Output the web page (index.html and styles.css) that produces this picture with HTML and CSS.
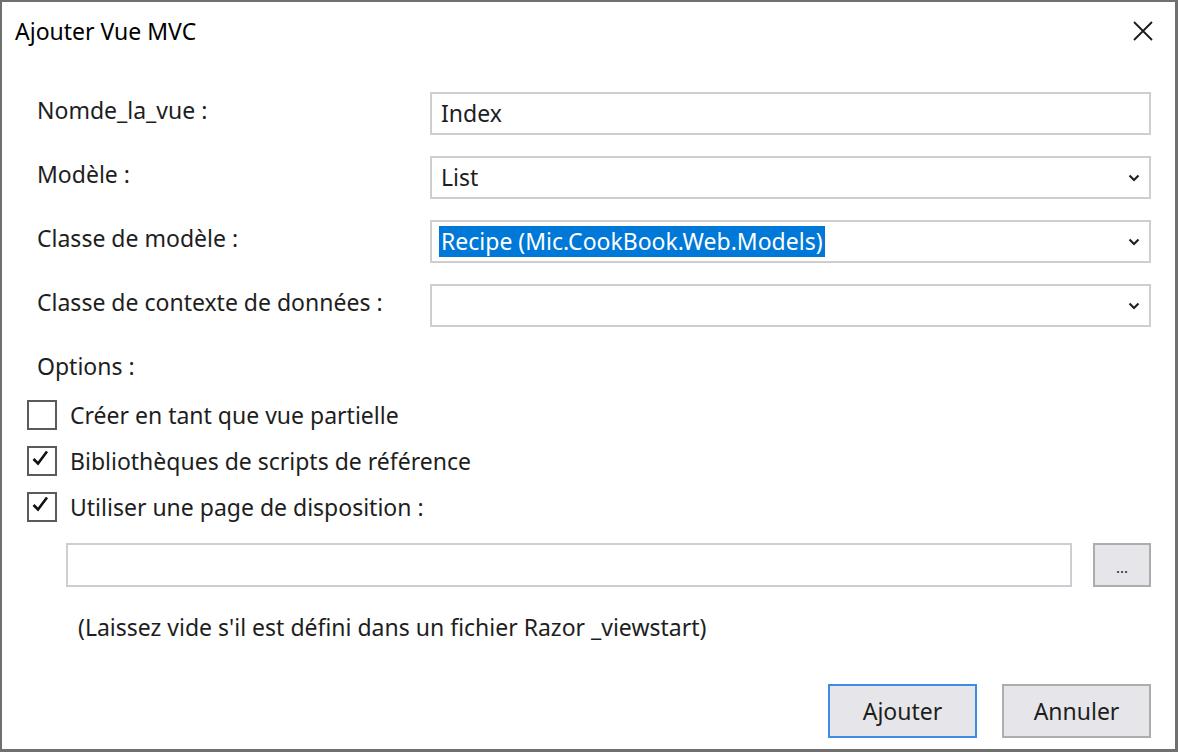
FILE: index.html
```html
<!DOCTYPE html>
<html lang="fr">
<head>
<meta charset="utf-8">
<title>Ajouter Vue MVC</title>
<link rel="stylesheet" href="styles.css">
</head>
<body>
<div class="dialog">
  <div class="header">
    <div class="title">Ajouter Vue MVC</div>
    <div class="close">
      <svg width="20" height="20" viewBox="0 0 20 20"><path d="M1 1 L19 19 M19 1 L1 19" stroke="#1a1a1a" stroke-width="1.8" fill="none"/></svg>
    </div>
  </div>
  <div class="form">
    <div class="label">Nomde_la_vue :</div>
    <div class="field"><span class="value">Index</span></div>

    <div class="label">Modèle :</div>
    <div class="field select"><span class="value">List</span><span class="chev"><svg width="12" height="8" viewBox="0 0 12 8"><path d="M1.5 1.5 L6 6 L10.5 1.5" stroke="#222" stroke-width="2.2" fill="none"/></svg></span></div>

    <div class="label">Classe de modèle :</div>
    <div class="field select"><span class="value selected">Recipe (Mic.CookBook.Web.Models)</span><span class="chev"><svg width="12" height="8" viewBox="0 0 12 8"><path d="M1.5 1.5 L6 6 L10.5 1.5" stroke="#222" stroke-width="2.2" fill="none"/></svg></span></div>

    <div class="label">Classe de contexte de données :</div>
    <div class="field select"><span class="value"></span><span class="chev"><svg width="12" height="8" viewBox="0 0 12 8"><path d="M1.5 1.5 L6 6 L10.5 1.5" stroke="#222" stroke-width="2.2" fill="none"/></svg></span></div>
  </div>

  <div class="options-label">Options :</div>
  <div class="checks">
    <div class="check-row"><span class="box"></span><span>Créer en tant que vue partielle</span></div>
    <div class="check-row"><span class="box"><svg width="26" height="26" viewBox="0 0 26 26"><path d="M4.5 11 L9 15.5 L18 3.5" stroke="#111" stroke-width="2.6" fill="none"/></svg></span><span>Bibliothèques de scripts de référence</span></div>
    <div class="check-row"><span class="box"><svg width="26" height="26" viewBox="0 0 26 26"><path d="M4.5 11 L9 15.5 L18 3.5" stroke="#111" stroke-width="2.6" fill="none"/></svg></span><span>Utiliser une page de disposition :</span></div>
  </div>

  <div class="layout-row">
    <div class="field layout-field"></div>
    <div class="browse">...</div>
  </div>
  <div class="note">(Laissez vide s'il est défini dans un fichier Razor _viewstart)</div>

  <div class="buttons">
    <div class="btn primary">Ajouter</div>
    <div class="btn">Annuler</div>
  </div>
</div>
</body>
</html>
```

FILE: styles.css
```css
* { box-sizing: border-box; }
html, body { margin: 0; padding: 0; background: #fff; }
body {
  font-family: "Noto Sans", "Open Sans", sans-serif;
  font-size: 23px;
  line-height: 30px;
  color: #1e1e1e;
}
.dialog {
  width: 1178px;
  height: 752px;
  border-style: solid;
  border-color: #707070;
  border-width: 2px 3px 3px 2px;
  background: #fff;
  position: relative;
}
.header {
  display: flex;
  justify-content: space-between;
  align-items: center;
  height: 58px;
  padding: 0 22px 0 13px;
}
.title {
  font-size: 23px;
  color: #000;
}
.close { display: flex; }
.form {
  display: grid;
  grid-template-columns: 393px 1fr;
  row-gap: 21px;
  padding: 32px 24px 0 35px;
}
.label {
  padding-top: 3px;
}
.field {
  height: 43px;
  border: 2px solid #cdcdd3;
  display: flex;
  align-items: center;
  padding: 0 0 0 7px;
  background: #fff;
}
.value { line-height: 31px; padding: 0 2px; }
.value.selected { background: #0078d7; color: #fff; }
.select { justify-content: space-between; }
.chev { display: flex; margin-right: 9px; }
.options-label {
  padding: 24px 0 0 35px;
}
.checks {
  padding: 19px 0 0 25px;
  display: flex;
  flex-direction: column;
  gap: 16px;
}
.check-row {
  display: flex;
  align-items: center;
  gap: 13px;
  height: 30px;
}
.box {
  width: 30px;
  height: 30px;
  border: 2px solid #5a5a5a;
  display: flex;
  background: #fff;
}
.layout-row {
  display: flex;
  gap: 21px;
  padding: 21px 24px 0 64px;
}
.layout-field { flex: 1; height: 44px; }
.browse {
  width: 58px;
  height: 44px;
  border: 2px solid #adadad;
  background: #e6e6ea;
  display: flex;
  align-items: center;
  justify-content: center;
  font-size: 15px;
  padding-top: 4px;
}
.note {
  padding: 25px 0 0 76px;
}
.buttons {
  position: absolute;
  right: 24px;
  bottom: 11px;
  display: flex;
  gap: 25px;
}
.btn {
  width: 149px;
  height: 54px;
  border: 2px solid #adadad;
  background: #e6e6ea;
  display: flex;
  align-items: center;
  justify-content: center;
  color: #1e1e1e;
}
.btn.primary { border-color: #3c8de6; }
```
